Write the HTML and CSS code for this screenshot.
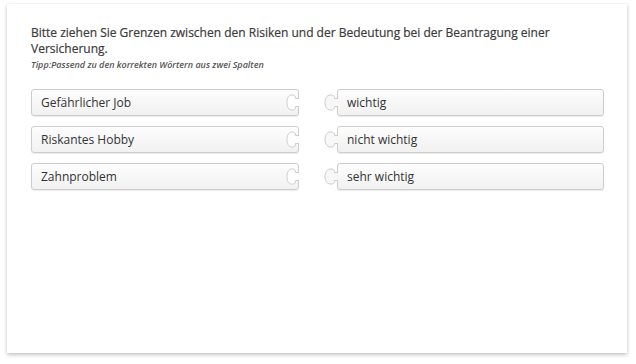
FILE: index.html
```html
<!DOCTYPE html>
<html lang="de">
<head>
  <meta charset="UTF-8">
  <title>Zuordnung</title>
  <link rel="stylesheet" href="styles.css">
</head>
<body>
  <div class="card">
    <h2 class="question">Bitte ziehen Sie Grenzen zwischen den Risiken und der Bedeutung bei der Beantragung einer Versicherung.</h2>
    <p class="tip">Tipp:Passend zu den korrekten Wörtern aus zwei Spalten</p>

    <div class="columns">
      <div class="column">
        <div class="piece piece-left">Gefährlicher Job
          <svg class="notch" width="16" height="27" viewBox="0 0 16 27"><path d="M16.5 9.5 H12.5 C13 7 11 5.5 8.5 6 C5 6.5 4 10 4 13.5 C4 17 5 20.5 8.5 21 C11 21.5 13 20 12.5 17.5 H16.5"/></svg>
        </div>
        <div class="piece piece-left">Riskantes Hobby
          <svg class="notch" width="16" height="27" viewBox="0 0 16 27"><path d="M16.5 9.5 H12.5 C13 7 11 5.5 8.5 6 C5 6.5 4 10 4 13.5 C4 17 5 20.5 8.5 21 C11 21.5 13 20 12.5 17.5 H16.5"/></svg>
        </div>
        <div class="piece piece-left">Zahnproblem
          <svg class="notch" width="16" height="27" viewBox="0 0 16 27"><path d="M16.5 9.5 H12.5 C13 7 11 5.5 8.5 6 C5 6.5 4 10 4 13.5 C4 17 5 20.5 8.5 21 C11 21.5 13 20 12.5 17.5 H16.5"/></svg>
        </div>
      </div>

      <div class="column column-right">
        <div class="piece piece-right">wichtig
          <svg class="knob" width="16" height="27" viewBox="0 0 16 27"><path d="M16 9.5 H12.5 C13 7 11 5.5 8 6 C4.5 6.5 3 10 3 13.5 C3 17 4.5 20.5 8 21 C11 21.5 13 20 12.5 17.5 H16"/></svg>
        </div>
        <div class="piece piece-right">nicht wichtig
          <svg class="knob" width="16" height="27" viewBox="0 0 16 27"><path d="M16 9.5 H12.5 C13 7 11 5.5 8 6 C4.5 6.5 3 10 3 13.5 C3 17 4.5 20.5 8 21 C11 21.5 13 20 12.5 17.5 H16"/></svg>
        </div>
        <div class="piece piece-right">sehr wichtig
          <svg class="knob" width="16" height="27" viewBox="0 0 16 27"><path d="M16 9.5 H12.5 C13 7 11 5.5 8 6 C4.5 6.5 3 10 3 13.5 C3 17 4.5 20.5 8 21 C11 21.5 13 20 12.5 17.5 H16"/></svg>
        </div>
      </div>
    </div>
  </div>
</body>
</html>
```

FILE: styles.css
```css
* {
  margin: 0;
  padding: 0;
  box-sizing: border-box;
  font-family: 'Open Sans', 'Noto Sans', sans-serif;
}

body {
  background: #fff;
  padding: 4px 9px 11px 7px;
  height: 364px;
}

.card {
  background: #fff;
  height: 349px;
  padding: 21px 23px 0 24px;
  box-shadow: 0 2px 4px rgba(0, 0, 0, 0.22), 0 0 2px rgba(0, 0, 0, 0.08);
}

.question {
  font-size: 12px;
  line-height: 16px;
  font-weight: 400;
  color: #3a3a3a;
  -webkit-text-stroke: 0.2px #3a3a3a;
}

.tip {
  margin-top: 1px;
  font-size: 9px;
  line-height: 13px;
  font-style: italic;
  font-weight: 600;
  color: #555;
}

.columns {
  display: flex;
  gap: 24px;
  margin-top: 18px;
}

.column {
  display: flex;
  flex-direction: column;
  gap: 10px;
  width: 268px;
}

.column-right {
  width: 281px;
  padding-left: 14px;
}

.piece {
  position: relative;
  height: 27px;
  padding-left: 9px;
  font-size: 12px;
  line-height: 25px;
  color: #333;
  border: 1px solid #cdcdcd;
  border-radius: 3px;
  background: linear-gradient(to bottom, #fdfdfd, #f1f1f1);
  box-shadow: 0 1px 1px rgba(0, 0, 0, 0.08);
}

.notch,
.knob {
  position: absolute;
  top: -1px;
}

.notch {
  right: -1px;
}

.notch path {
  fill: #fff;
  stroke: #cdcdcd;
  stroke-width: 1;
}

.knob {
  left: -16px;
}

.knob path {
  fill: #f7f7f7;
  stroke: #cdcdcd;
  stroke-width: 1;
}
```
